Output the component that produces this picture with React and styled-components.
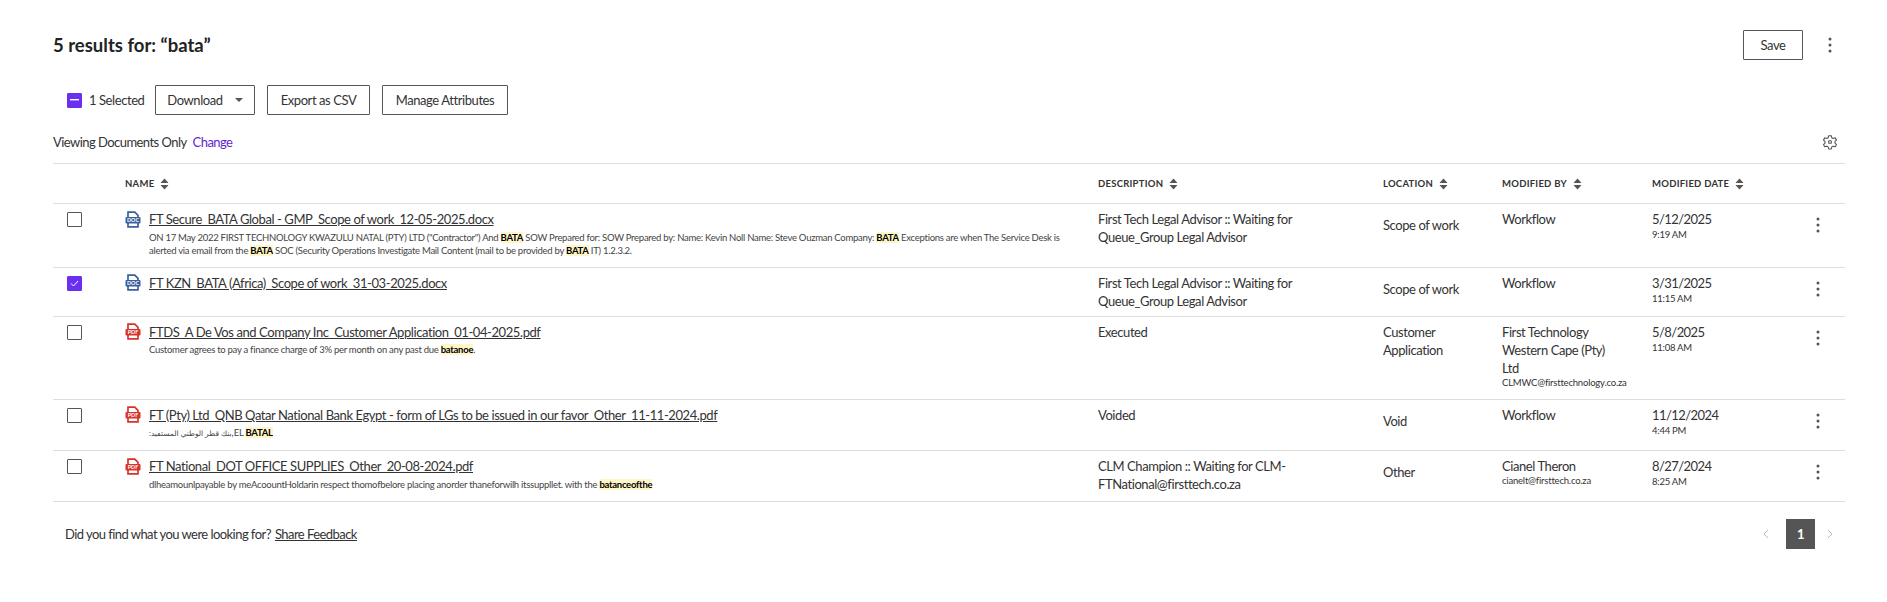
import React from 'react';
import styled, { createGlobalStyle } from 'styled-components';

const GlobalStyle = createGlobalStyle`
  html, body {
    margin: 0;
    padding: 0;
    background: #fff;
    font-family: 'Lato', 'DejaVu Sans', sans-serif;
    letter-spacing: -0.42px;
    color: #333;
  }
`;

const Page = styled.div`
  padding: 30px 42px 0 53px;
`;

const TitleBar = styled.div`
  display: flex;
  align-items: center;
  height: 30px;
`;

const Title = styled.h1`
  margin: 0;
  flex: 1;
  font-size: 18.5px;
  font-weight: 700;
  letter-spacing: 0;
  color: #222;
`;

const Button = styled.button`
  height: 30px;
  box-sizing: border-box;
  width: ${(p) => p.$width}px;
  padding: 0;
  background: #fff;
  border: 1px solid #555;
  border-radius: 1px;
  font: inherit;
  font-size: 13px;
  letter-spacing: inherit;
  color: #333;
  display: flex;
  align-items: center;
  justify-content: center;
  gap: 12px;
`;

const Caret = styled.span`
  width: 0;
  height: 0;
  border-left: 4px solid transparent;
  border-right: 4px solid transparent;
  border-top: 4px solid #555;
`;

const TopKebab = styled.div`
  width: 20px;
  margin: 0 5px 0 17px;
  display: flex;
  justify-content: center;
`;

const Toolbar = styled.div`
  display: flex;
  align-items: center;
  margin-top: 25px;
  padding-left: 14px;
  height: 30px;
`;

const SelectedLabel = styled.span`
  font-size: 13px;
  margin: 0 12px 0 7px;
  width: 54px;
  white-space: nowrap;
`;

const ToolButtons = styled.div`
  display: flex;
  gap: 12px;
`;

const ViewRow = styled.div`
  display: flex;
  align-items: center;
  justify-content: space-between;
  height: 20px;
  margin-top: 17px;
  font-size: 13px;
  letter-spacing: -0.55px;
`;

const ChangeLink = styled.a`
  color: #5f1fd0;
  margin-left: 6px;
`;

const Gear = styled.div`
  width: 20px;
  margin-right: 5px;
  display: flex;
  justify-content: center;
  color: #555;
`;

const Table = styled.div`
  margin-top: 11px;
  border-top: 1px solid #ddd;
`;

const columns = '72px 973px 285px 119px 150px 1fr 40px';

const HeadRow = styled.div`
  display: grid;
  grid-template-columns: ${columns};
  align-items: center;
  height: 39px;
  border-bottom: 1px solid #ddd;
  box-sizing: content-box;
`;

const HeadCell = styled.div`
  grid-column: ${(p) => p.$col};
  display: flex;
  align-items: center;
  gap: 6px;
  font-size: 9.5px;
  font-weight: 700;
  letter-spacing: 0.25px;
  color: #333;
  text-transform: uppercase;
`;

const Row = styled.div`
  display: grid;
  grid-template-columns: ${columns};
  align-items: start;
  padding: 6px 0;
  border-bottom: 1px solid #ddd;
  font-size: 13px;
  line-height: 18px;
`;

const CheckCell = styled.div`
  padding: 2px 0 0 14px;
`;

const Box = styled.div`
  width: 15px;
  height: 15px;
  box-sizing: border-box;
  border-radius: 1px;
  display: flex;
  align-items: center;
  justify-content: center;
  background: ${(p) => (p.$on ? '#6b2ff2' : '#fff')};
  border: 1px solid ${(p) => (p.$on ? '#6b2ff2' : '#555')};
`;

const NameCell = styled.div`
  padding-bottom: 4px;
  min-width: 0;
`;

const FileLine = styled.div`
  display: flex;
  align-items: center;
  gap: 8px;
  height: 18px;
`;

const FileName = styled.a`
  color: #333;
  text-decoration: underline;
  white-space: nowrap;
`;

const Snippet = styled.div`
  margin: 2.5px 0 0 24px;
  width: 912px;
  font-size: 9.5px;
  letter-spacing: -0.27px;
  line-height: 13px;
  color: #444;
`;

const ArabicRun = styled.span`
  font-size: 7.5px;
  letter-spacing: 0;
`;

const Mark = styled.mark`
  background: #fff6c8;
  color: #000;
  font-weight: 700;
`;

const DescCell = styled.div`
  padding-right: 75px;
`;

const LocationCell = styled.div`
  padding-top: ${(p) => (p.$single ? '6px' : '0')};
  padding-right: 20px;
`;

const ByCell = styled.div`
  padding-right: 45px;
`;

const Email = styled.div`
  font-size: 9.5px;
  letter-spacing: -0.2px;
  line-height: 12px;
  margin-bottom: 4px;
  white-space: nowrap;
`;

const DateText = styled.div`
  letter-spacing: -0.55px;
`;

const TimeText = styled.div`
  font-size: 9.5px;
  letter-spacing: -0.25px;
  line-height: 12px;
  margin-top: 1px;
`;

const KebabCell = styled.div`
  padding: 7px 14px 0 0;
  display: flex;
  justify-content: center;
`;

const Footer = styled.div`
  display: flex;
  align-items: center;
  justify-content: space-between;
  margin-top: 17px;
  height: 30px;
  padding-left: 12px;
  font-size: 13px;
  letter-spacing: -0.55px;
`;

const FeedbackLink = styled.a`
  color: #333;
  text-decoration: underline;
  margin-left: 4px;
`;

const Pager = styled.div`
  display: flex;
  align-items: center;
  margin-right: 12px;
  color: #bbb;
`;

const PageNum = styled.div`
  width: 29px;
  height: 30px;
  margin: 0 12px 0 17px;
  background: #555;
  color: #fff;
  font-size: 13px;
  font-weight: 700;
  display: flex;
  align-items: center;
  justify-content: center;
`;

const Kebab = ({ size = 16 }) => (
  <svg width="4" height={size} viewBox={`0 0 4 ${size}`} fill="#555">
    <circle cx="2" cy={size / 2 - 6} r="1.5" />
    <circle cx="2" cy={size / 2} r="1.5" />
    <circle cx="2" cy={size / 2 + 6} r="1.5" />
  </svg>
);

const SortIcon = () => (
  <svg width="9" height="12" viewBox="0 0 9 12" fill="#555">
    <path d="M4.5 0.5 8.5 5H0.5Z" />
    <path d="M4.5 11.5 0.5 7H8.5Z" />
  </svg>
);

const FileIcon = ({ kind }) => {
  const color = kind === 'pdf' ? '#d8322c' : '#3b5f9e';
  return (
    <svg width="16" height="17" viewBox="0 0 16 17" style={{ flexShrink: 0 }}>
      <path d="M3 6V1.2h6.8L13 4.4V6M3 12v3.8h10V12" fill="none" stroke={color} strokeWidth="1.7" />
      <rect x="0.5" y="6" width="15" height="6.5" rx="1" fill={color} />
      <text x="8" y="11" textAnchor="middle" fontSize="5.4" fontWeight="700" letterSpacing="0" fontFamily="Lato, sans-serif" fill="#fff">
        {kind === 'pdf' ? 'PDF' : 'DOC'}
      </text>
    </svg>
  );
};

const rows = [
  {
    file: 'FT Secure_BATA Global - GMP_Scope of work_12-05-2025.docx',
    kind: 'doc',
    snippet: (
      <>
        ON 17 May 2022 FIRST TECHNOLOGY KWAZULU NATAL (PTY) LTD ("Contractor") And <Mark>BATA</Mark> SOW Prepared for: SOW Prepared by: Name: Kevin Noll Name: Steve Ouzman Company: <Mark>BATA</Mark> Exceptions are when The Service Desk is alerted via email from the <Mark>BATA</Mark> SOC (Security Operations Investigate Mail Content (mail to be provided by <Mark>BATA</Mark> IT) 1.2.3.2.
      </>
    ),
    desc: 'First Tech Legal Advisor :: Waiting for Queue_Group Legal Advisor',
    location: 'Scope of work',
    by: 'Workflow',
    date: '5/12/2025',
    time: '9:19 AM',
  },
  {
    file: 'FT KZN_BATA (Africa)_Scope of work_31-03-2025.docx',
    kind: 'doc',
    checked: true,
    desc: 'First Tech Legal Advisor :: Waiting for Queue_Group Legal Advisor',
    location: 'Scope of work',
    by: 'Workflow',
    date: '3/31/2025',
    time: '11:15 AM',
  },
  {
    file: 'FTDS_A De Vos and Company Inc_Customer Application_01-04-2025.pdf',
    kind: 'pdf',
    snippet: (
      <>
        Customer agrees to pay a finance charge of 3% per month on any past due <Mark>batanoe</Mark>.
      </>
    ),
    desc: 'Executed',
    location: 'Customer Application',
    multiLocation: true,
    by: 'First Technology Western Cape (Pty) Ltd',
    email: 'CLMWC@firsttechnology.co.za',
    date: '5/8/2025',
    time: '11:08 AM',
  },
  {
    file: 'FT (Pty) Ltd_QNB Qatar National Bank Egypt - form of LGs to be issued in our favor_Other_11-11-2024.pdf',
    kind: 'pdf',
    snippet: (
      <>
        <ArabicRun>:بنك قطر الوطني المستفيد</ArabicRun>,EL <Mark>BATAL</Mark>
      </>
    ),
    desc: 'Voided',
    location: 'Void',
    by: 'Workflow',
    date: '11/12/2024',
    time: '4:44 PM',
  },
  {
    file: 'FT National_DOT OFFICE SUPPLIES_Other_20-08-2024.pdf',
    kind: 'pdf',
    snippet: (
      <>
        dlheamounlpayable by meAcoountHoldarin respect thomofbelore placing anorder thaneforwilh itssuppllet. with the <Mark>batanceofthe</Mark>
      </>
    ),
    desc: 'CLM Champion :: Waiting for CLM-FTNational@firsttech.co.za',
    location: 'Other',
    by: 'Cianel Theron',
    email: 'cianelt@firsttech.co.za',
    date: '8/27/2024',
    time: '8:25 AM',
  },
];

const headers = [
  ['Name', 2],
  ['Description', 3],
  ['Location', 4],
  ['Modified By', 5],
  ['Modified Date', 6],
];

export default function App() {
  return (
    <Page>
      <GlobalStyle />
      <TitleBar>
        <Title>5 results for: “bata”</Title>
        <Button $width={60}>Save</Button>
        <TopKebab>
          <Kebab />
        </TopKebab>
      </TitleBar>

      <Toolbar>
        <Box $on>
          <svg width="9" height="2" viewBox="0 0 9 2">
            <rect width="9" height="1.4" fill="#fff" />
          </svg>
        </Box>
        <SelectedLabel>1 Selected</SelectedLabel>
        <ToolButtons>
          <Button $width={100}>
            Download
            <Caret />
          </Button>
          <Button $width={103}>Export as CSV</Button>
          <Button $width={126}>Manage Attributes</Button>
        </ToolButtons>
      </Toolbar>

      <ViewRow>
        <span>
          Viewing Documents Only
          <ChangeLink>Change</ChangeLink>
        </span>
        <Gear>
          <svg width="16" height="16" viewBox="0 0 24 24" fill="none" stroke="currentColor" strokeWidth="1.6" strokeLinejoin="round">
            <path d="M10 2.5h4l.6 3 2.3 1.3 2.9-1 2 3.4-2.3 2v2.6l2.3 2-2 3.4-2.9-1-2.3 1.3-.6 3h-4l-.6-3-2.3-1.3-2.9 1-2-3.4 2.3-2v-2.6l-2.3-2 2-3.4 2.9 1 2.3-1.3z" />
            <rect x="10" y="10" width="4" height="4" rx="1" />
          </svg>
        </Gear>
      </ViewRow>

      <Table>
        <HeadRow>
          {headers.map(([label, col]) => (
            <HeadCell key={label} $col={col}>
              {label}
              <SortIcon />
            </HeadCell>
          ))}
        </HeadRow>
        {rows.map((row) => (
          <Row key={row.file}>
            <CheckCell>
              <Box $on={row.checked}>
                {row.checked && (
                  <svg width="9" height="7" viewBox="0 0 9 7" fill="none" stroke="#fff" strokeWidth="1">
                    <path d="M1 3.5 3.5 6 8 1" />
                  </svg>
                )}
              </Box>
            </CheckCell>
            <NameCell>
              <FileLine>
                <FileIcon kind={row.kind} />
                <FileName>{row.file}</FileName>
              </FileLine>
              {row.snippet && <Snippet>{row.snippet}</Snippet>}
            </NameCell>
            <DescCell>{row.desc}</DescCell>
            <LocationCell $single={!row.multiLocation}>{row.location}</LocationCell>
            <ByCell>
              {row.by}
              {row.email && <Email>{row.email}</Email>}
            </ByCell>
            <div>
              <DateText>{row.date}</DateText>
              <TimeText>{row.time}</TimeText>
            </div>
            <KebabCell>
              <Kebab />
            </KebabCell>
          </Row>
        ))}
      </Table>

      <Footer>
        <span>
          Did you find what you were looking for?
          <FeedbackLink>Share Feedback</FeedbackLink>
        </span>
        <Pager>
          <svg width="6" height="10" viewBox="0 0 6 10" fill="none" stroke="currentColor">
            <path d="M5 1 1 5l4 4" />
          </svg>
          <PageNum>1</PageNum>
          <svg width="6" height="10" viewBox="0 0 6 10" fill="none" stroke="currentColor">
            <path d="M1 1l4 4-4 4" />
          </svg>
        </Pager>
      </Footer>
    </Page>
  );
}
